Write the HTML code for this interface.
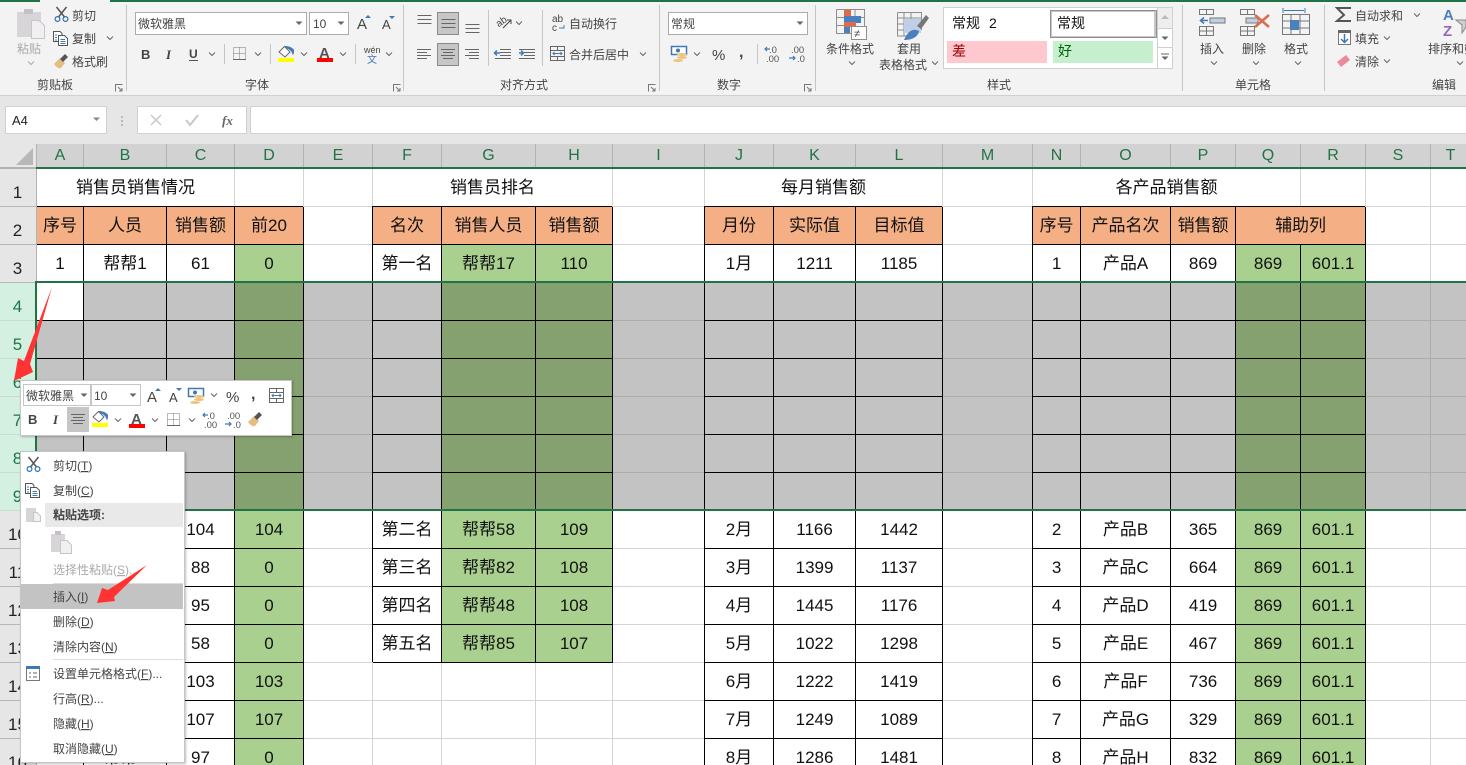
<!DOCTYPE html>
<html lang="zh">
<head>
<meta charset="utf-8">
<title>Excel</title>
<style>
html,body{margin:0;padding:0;width:1466px;height:765px;overflow:hidden;background:#fff}
body{position:relative;font-family:"Liberation Sans","Noto Sans CJK SC",sans-serif}
.abs{position:absolute}
svg text{font-family:"Liberation Sans","Noto Sans CJK SC",sans-serif;font-size:12px;fill:#444}
#sheet{position:absolute;left:37px;top:169px;border-collapse:separate;border-spacing:0;table-layout:fixed;width:1459px}
#sheet td{box-sizing:border-box;height:38px;padding:0;border-right:1px solid #d4d4d4;border-bottom:1px solid #d4d4d4;text-align:center;white-space:nowrap;overflow:hidden;font-size:17px;line-height:36px;color:#111}
#sheet tr.u td{line-height:34px}
#sheet td.b{border-color:#000;box-shadow:-1px -1px 0 #000}
#sheet td.o{background:#f4b084}
#sheet td.g{background:#a9d08e}
#sheet tr.s td{background:#c3c3c3;border-color:#acacac}
#sheet tr.s td.b{border-color:#000}
#sheet tr.s td.g{background:#84a16f}
#sheet tr.s td.w{background:#fff}
#colh{position:absolute;left:0;top:144px;width:1466px;height:24px;background:#d2d2d2;display:flex;overflow:hidden}
#colh div{box-sizing:border-box;flex:none;height:24px;border-right:1px solid #b2b2b2;text-align:center;font-size:16px;line-height:24px;color:#217346}
#rowh{position:absolute;left:0;top:169px;width:37px;height:596px;overflow:hidden}
#rowh div{box-sizing:border-box;height:38px;background:#e6e6e6;border-right:1px solid #b2b2b2;border-bottom:1px solid #b8b8b8;text-align:center;font-size:17px;line-height:47px;color:#222;padding-right:1px}
#rowh div.s{background:#d3f0e0;color:#217346;border-right-color:#217346;border-bottom-color:#c3e0d0}
</style>
</head>
<body>

<!-- SHEET -->
<table id="sheet">
<colgroup><col style="width:47px"><col style="width:83px"><col style="width:68px"><col style="width:69px"><col style="width:69px"><col style="width:69px"><col style="width:94px"><col style="width:77px"><col style="width:92px"><col style="width:69px"><col style="width:82px"><col style="width:87px"><col style="width:90px"><col style="width:48px"><col style="width:90px"><col style="width:65px"><col style="width:65px"><col style="width:65px"><col style="width:65px"><col style="width:65px"></colgroup>
<tr><td colspan="3">销售员销售情况</td><td></td><td></td><td colspan="3">销售员排名</td><td></td><td colspan="3">每月销售额</td><td></td><td colspan="4">各产品销售额</td><td></td><td></td><td></td></tr>
<tr><td class="b o">序号</td><td class="b o">人员</td><td class="b o">销售额</td><td class="b o">前20</td><td></td><td class="b o">名次</td><td class="b o">销售人员</td><td class="b o">销售额</td><td></td><td class="b o">月份</td><td class="b o">实际值</td><td class="b o">目标值</td><td></td><td class="b o">序号</td><td class="b o">产品名次</td><td class="b o">销售额</td><td class="b o" colspan="2">辅助列</td><td></td><td></td></tr>
<tr><td class="b">1</td><td class="b">帮帮1</td><td class="b">61</td><td class="b g">0</td><td></td><td class="b">第一名</td><td class="b g">帮帮17</td><td class="b g">110</td><td></td><td class="b">1月</td><td class="b">1211</td><td class="b">1185</td><td></td><td class="b">1</td><td class="b">产品A</td><td class="b">869</td><td class="b g">869</td><td class="b g">601.1</td><td></td><td></td></tr>
<tr class="s"><td class="b w"></td><td class="b"></td><td class="b"></td><td class="b g"></td><td></td><td class="b"></td><td class="b g"></td><td class="b g"></td><td></td><td class="b"></td><td class="b"></td><td class="b"></td><td></td><td class="b"></td><td class="b"></td><td class="b"></td><td class="b g"></td><td class="b g"></td><td></td><td></td></tr>
<tr class="s"><td class="b"></td><td class="b"></td><td class="b"></td><td class="b g"></td><td></td><td class="b"></td><td class="b g"></td><td class="b g"></td><td></td><td class="b"></td><td class="b"></td><td class="b"></td><td></td><td class="b"></td><td class="b"></td><td class="b"></td><td class="b g"></td><td class="b g"></td><td></td><td></td></tr>
<tr class="s"><td class="b"></td><td class="b"></td><td class="b"></td><td class="b g"></td><td></td><td class="b"></td><td class="b g"></td><td class="b g"></td><td></td><td class="b"></td><td class="b"></td><td class="b"></td><td></td><td class="b"></td><td class="b"></td><td class="b"></td><td class="b g"></td><td class="b g"></td><td></td><td></td></tr>
<tr class="s"><td class="b"></td><td class="b"></td><td class="b"></td><td class="b g"></td><td></td><td class="b"></td><td class="b g"></td><td class="b g"></td><td></td><td class="b"></td><td class="b"></td><td class="b"></td><td></td><td class="b"></td><td class="b"></td><td class="b"></td><td class="b g"></td><td class="b g"></td><td></td><td></td></tr>
<tr class="s"><td class="b"></td><td class="b"></td><td class="b"></td><td class="b g"></td><td></td><td class="b"></td><td class="b g"></td><td class="b g"></td><td></td><td class="b"></td><td class="b"></td><td class="b"></td><td></td><td class="b"></td><td class="b"></td><td class="b"></td><td class="b g"></td><td class="b g"></td><td></td><td></td></tr>
<tr class="s"><td class="b"></td><td class="b"></td><td class="b"></td><td class="b g"></td><td></td><td class="b"></td><td class="b g"></td><td class="b g"></td><td></td><td class="b"></td><td class="b"></td><td class="b"></td><td></td><td class="b"></td><td class="b"></td><td class="b"></td><td class="b g"></td><td class="b g"></td><td></td><td></td></tr>
<tr class="u"><td class="b">2</td><td class="b">帮帮2</td><td class="b">104</td><td class="b g">104</td><td></td><td class="b">第二名</td><td class="b g">帮帮58</td><td class="b g">109</td><td></td><td class="b">2月</td><td class="b">1166</td><td class="b">1442</td><td></td><td class="b">2</td><td class="b">产品B</td><td class="b">365</td><td class="b g">869</td><td class="b g">601.1</td><td></td><td></td></tr>
<tr class="u"><td class="b">3</td><td class="b">帮帮3</td><td class="b">88</td><td class="b g">0</td><td></td><td class="b">第三名</td><td class="b g">帮帮82</td><td class="b g">108</td><td></td><td class="b">3月</td><td class="b">1399</td><td class="b">1137</td><td></td><td class="b">3</td><td class="b">产品C</td><td class="b">664</td><td class="b g">869</td><td class="b g">601.1</td><td></td><td></td></tr>
<tr class="u"><td class="b">4</td><td class="b">帮帮4</td><td class="b">95</td><td class="b g">0</td><td></td><td class="b">第四名</td><td class="b g">帮帮48</td><td class="b g">108</td><td></td><td class="b">4月</td><td class="b">1445</td><td class="b">1176</td><td></td><td class="b">4</td><td class="b">产品D</td><td class="b">419</td><td class="b g">869</td><td class="b g">601.1</td><td></td><td></td></tr>
<tr class="u"><td class="b">5</td><td class="b">帮帮5</td><td class="b">58</td><td class="b g">0</td><td></td><td class="b">第五名</td><td class="b g">帮帮85</td><td class="b g">107</td><td></td><td class="b">5月</td><td class="b">1022</td><td class="b">1298</td><td></td><td class="b">5</td><td class="b">产品E</td><td class="b">467</td><td class="b g">869</td><td class="b g">601.1</td><td></td><td></td></tr>
<tr class="u"><td class="b">6</td><td class="b">帮帮6</td><td class="b">103</td><td class="b g">103</td><td></td><td></td><td></td><td></td><td></td><td class="b">6月</td><td class="b">1222</td><td class="b">1419</td><td></td><td class="b">6</td><td class="b">产品F</td><td class="b">736</td><td class="b g">869</td><td class="b g">601.1</td><td></td><td></td></tr>
<tr class="u"><td class="b">7</td><td class="b">帮帮7</td><td class="b">107</td><td class="b g">107</td><td></td><td></td><td></td><td></td><td></td><td class="b">7月</td><td class="b">1249</td><td class="b">1089</td><td></td><td class="b">7</td><td class="b">产品G</td><td class="b">329</td><td class="b g">869</td><td class="b g">601.1</td><td></td><td></td></tr>
<tr class="u"><td class="b">8</td><td class="b">帮帮8</td><td class="b">97</td><td class="b g">0</td><td></td><td></td><td></td><td></td><td></td><td class="b">8月</td><td class="b">1286</td><td class="b">1481</td><td></td><td class="b">8</td><td class="b">产品H</td><td class="b">832</td><td class="b g">869</td><td class="b g">601.1</td><td></td><td></td></tr>
</table>

<!-- Selection outline -->
<div class="abs" style="left:36px;top:281px;width:1430px;height:2px;background:#217346"></div>
<div class="abs" style="left:36px;top:509px;width:1430px;height:2px;background:#217346"></div>

<!-- Column headers -->
<div id="colh">
<div style="width:37px;background:#e6e6e6"></div><div style="width:47px">A</div><div style="width:83px">B</div><div style="width:68px">C</div><div style="width:69px">D</div><div style="width:69px">E</div><div style="width:69px">F</div><div style="width:94px">G</div><div style="width:77px">H</div><div style="width:92px">I</div><div style="width:69px">J</div><div style="width:82px">K</div><div style="width:87px">L</div><div style="width:90px">M</div><div style="width:48px">N</div><div style="width:90px">O</div><div style="width:65px">P</div><div style="width:65px">Q</div><div style="width:65px">R</div><div style="width:65px">S</div><div style="width:65px;border-right:0;padding-right:26px">T</div>
</div>
<div class="abs" style="left:0;top:167px;width:36px;height:2px;background:#b2b2b2"></div>
<div class="abs" style="left:36px;top:167px;width:1430px;height:2px;background:#217346"></div>
<svg class="abs" style="left:0;top:144px" width="36" height="24"><path d="M33 4V21H16Z" fill="#b8b8b8"/></svg>

<!-- Row headers -->
<div id="rowh">
<div>1</div><div>2</div><div>3</div><div class="s">4</div><div class="s">5</div><div class="s">6</div><div class="s">7</div><div class="s">8</div><div class="s">9</div><div>10</div><div>11</div><div>12</div><div>13</div><div>14</div><div>15</div><div>16</div>
</div>
<div class="abs" style="left:35px;top:281px;width:2px;height:230px;background:#217346"></div>

<!-- RIBBON + FORMULA BAR -->
<div class="abs" style="left:0;top:0;width:1466px;height:96px;background:#f3f3f3;border-bottom:1px solid #d0d0d0;box-sizing:border-box"></div>
<div class="abs" style="left:0;top:96px;width:1466px;height:48px;background:#e6e6e6"></div>
<div class="abs" style="left:0;top:0;width:40px;height:2px;background:#217346"></div>
<div class="abs" style="left:110px;top:0;width:1356px;height:2px;background:#217346"></div>

<svg class="abs" style="left:0;top:0" width="1466" height="144" viewBox="0 0 1466 144">
<defs>
<path id="c" d="M-3 -1.5L0 1.5L3 -1.5" fill="none" stroke="#666"/>
<path id="t" d="M-3.5 -1.5H3.5L0 2Z" fill="#666"/>
<g id="l" fill="none" stroke="#777"><path d="M7.5 .5H.5V7.5"/><path d="M3 3L7 7M7 4V7H4"/></g>
<g id="sc" fill="none"><path d="M2.5 0L10.5 10M12.5 0L4.5 10" stroke="#555" stroke-width="1.5"/><circle cx="3.5" cy="12" r="2.4" stroke="#2f6fb0" stroke-width="1.2"/><circle cx="11.5" cy="12" r="2.4" stroke="#2f6fb0" stroke-width="1.2"/></g>
<g id="cp" fill="#fff" stroke="#555"><path d="M.5 .5H7L9 2.5V10.5H.5Z"/><path d="M5.500 4.500H11.500L14.500 7.500V14.500H5.500Z"/><path d="M2 4H4M2 6.500H4M2 9H4M7.500 8.500H12M7.500 10.500H12.500M7.500 12.500H12.500" stroke="#3f78b5" fill="none"/></g>
<g id="br"><path d="M0 10L6 4L11 9L7 14C5 15 2 13 0 10Z" fill="#e6bd85"/><path d="M6 5L11 0L14 3L9 8Z" fill="#555"/></g>
<g id="fb"><path d="M1 7L6.500 1.500L12 7L7 12Z" fill="#fff" stroke="#666"/><path d="M7 1C10 1 14 2 16 5C16 7 16 9 15 10C14 9 14 7 13 6C11 4 9 3 7 3Z" fill="#3f78b5"/><rect x="0" y="13" width="16" height="4" fill="#ff0"/></g>
<g id="fc"><text x="2" y="13" style="font-size:15px;font-weight:700;fill:#555">A</text><rect x="0" y="13" width="16" height="4" fill="#f00"/></g>
<g id="bd"><path d="M.5 .5H12.500V12.500H.5ZM6.500 .5V12.500M.5 6.500H12.500" fill="none" stroke="#777" stroke-dasharray="1 1"/><path d="M0 12.500H13" stroke="#666"/></g>
<g id="ac"><rect x=".5" y=".5" width="15" height="8" fill="#fff" stroke="#3f78b5" stroke-width="1.500"/><circle cx="7" cy="4.500" r="2" fill="#3f78b5"/><ellipse cx="11" cy="8.500" rx="5" ry="1.500" fill="#eec27f"/><ellipse cx="11" cy="11.500" rx="5" ry="1.500" fill="#eec27f"/><ellipse cx="7" cy="14.500" rx="5" ry="1.500" fill="#eec27f"/></g>
<g id="dl"><text x="4" y="7" style="font-size:9.500px;fill:#555">.0</text><text x="1" y="16" style="font-size:9.500px;fill:#555">.00</text><path d="M0 3H5M2 1L0 3L2 5" stroke="#3f78b5" fill="none" stroke-width="1.200"/></g>
<g id="dr"><text x="2" y="7" style="font-size:9.500px;fill:#555">.00</text><text x="8" y="16" style="font-size:9.500px;fill:#555">.0</text><path d="M0 12H6M4 10L6 12L4 14" stroke="#3f78b5" fill="none" stroke-width="1.200"/></g>
<g id="mg" fill="none" stroke="#666"><path d="M.5 .5H14.500V14.500H.5ZM.5 4.500H14.500M.5 10.500H14.500M7.500 .5V4.500M7.500 10.500V14.500"/><path d="M3 7.500H12M4.500 6L3 7.500L4.500 9M10.500 6L12 7.500L10.500 9" stroke="#3f78b5"/></g>
<g id="al" stroke="#666"><path d="M.5 .5H14.500M.5 4.500H14.500M.5 8.500H14.500" fill="none"/></g>
</defs>

<!-- Clipboard -->
<rect x="17" y="12" width="24" height="25" rx="1" fill="#d8d5d8"/><rect x="24" y="9" width="9" height="5" fill="#c4c0c4"/>
<path d="M31.500 20.500H39L44.500 25.500V38.500H31.500Z" fill="#f1eff2" stroke="#c8c5c8"/>
<text x="17" y="53" style="fill:#a8a8a8">粘贴</text>
<use href="#c" x="31" y="63" opacity=".5"/>
<use href="#sc" x="54" y="7"/><text x="72" y="20">剪切</text>
<use href="#cp" x="53" y="31"/><text x="72" y="43">复制</text><use href="#c" x="110" y="38"/>
<use href="#br" x="54" y="54"/><text x="72" y="66">格式刷</text>
<text x="37" y="89">剪贴板</text><use href="#l" x="115" y="84"/>
<path d="M126.500 5V91M403.500 5V91M659.500 5V91M815.500 5V91M1182.500 5V91M1324.500 5V91" stroke="#c6c6c6"/>

<!-- Font -->
<rect x="135.500" y="12.500" width="171" height="22" fill="#fff" stroke="#ababab"/><text x="138" y="28">微软雅黑</text><use href="#t" x="299" y="23"/>
<rect x="309.500" y="12.500" width="39" height="22" fill="#fff" stroke="#ababab"/><text x="313" y="28">10</text><use href="#t" x="341" y="23"/>
<text x="357" y="29" style="font-size:15px">A</text><path d="M365 18h6l-3-3z" fill="#3f78b5"/>
<text x="382" y="29" style="font-size:13px">A</text><path d="M389 16h6l-3 3z" fill="#3f78b5"/>
<text x="141" y="59" style="font-weight:700;font-size:13px">B</text><text x="166" y="59" style="font-style:italic;font-family:'Liberation Serif',serif;font-weight:700;font-size:13px">I</text>
<text x="189" y="58" style="font-weight:700">U</text><path d="M189 60.500h9" stroke="#555"/><use href="#c" x="212" y="54"/>
<path d="M224.500 44V64M270.500 44V64M355.500 44V64M488.500 10V66M542.500 10V66M757.500 44V64" stroke="#c6c6c6"/>
<use href="#bd" x="233" y="47"/><use href="#c" x="258" y="54"/>
<use href="#fb" x="278" y="45"/><use href="#c" x="304" y="54"/>
<use href="#fc" x="317" y="45"/><use href="#c" x="343" y="54"/>
<text x="364" y="53" style="font-size:9px">wén</text><text x="367" y="63" style="font-size:10px;fill:#3f78b5">文</text><use href="#c" x="389" y="54"/>
<text x="245" y="89">字体</text><use href="#l" x="393" y="84"/>

<!-- Alignment -->
<use href="#al" x="417" y="15"/>
<rect x="437.500" y="12.500" width="21" height="22" fill="#c6c6c6" stroke="#8a8a8a"/><use href="#al" x="441" y="19"/>
<use href="#al" x="465" y="24"/>
<g stroke="#666"><path d="M417 49.500H431M417 52.500H427M417 55.500H431M417 58.500H427"/><path d="M465 49.500H479M469 52.500H479M465 55.500H479M469 58.500H479"/></g>
<rect x="437.500" y="43.500" width="21" height="22" fill="#c6c6c6" stroke="#8a8a8a"/><path d="M441 49.500H455M443 52.500H453M441 55.500H455M443 58.500H453" stroke="#666"/>
<text x="496" y="25" style="font-size:10px" transform="rotate(-35 501 22)">ab</text><path d="M503 28L511 20M507 20H511V24" stroke="#444" fill="none"/><use href="#c" x="519" y="23"/>
<path d="M500 49.500H511M500 52.500H511M500 55.500H511M495 58.500H511M519 49.500H535M524 52.500H535M524 55.500H535M519 58.500H535" stroke="#666"/>
<path d="M500 53H495M497 50.500L494.500 53L497 55.500" stroke="#3f78b5" fill="none" stroke-width="1.500"/><path d="M519 53H523M521 50.500L523.500 53L521 55.500" stroke="#3f78b5" fill="none" stroke-width="1.500"/>
<text x="552" y="22" style="font-size:10px">ab</text><text x="552" y="31" style="font-size:10px">c</text><path d="M564 25V28H559" stroke="#3f78b5" fill="none"/>
<text x="569" y="28">自动换行</text>
<use href="#mg" x="550" y="46"/><text x="569" y="59">合并后居中</text><use href="#c" x="643" y="54"/>
<text x="500" y="89">对齐方式</text><use href="#l" x="648" y="84"/>

<!-- Number -->
<rect x="668.500" y="12.500" width="139" height="22" fill="#fff" stroke="#ababab"/><text x="671" y="28">常规</text><use href="#t" x="800" y="23"/>
<use href="#ac" x="671" y="46"/><use href="#c" x="697" y="54"/>
<text x="712" y="60" style="font-size:15px">%</text><text x="739" y="57" style="font-size:16px;font-weight:700">,</text>
<use href="#dl" x="765" y="46"/><use href="#dr" x="789" y="46"/>
<text x="717" y="89">数字</text><use href="#l" x="804" y="84"/>

<!-- Cond format -->
<g fill="none" stroke="#8e8e8e"><path d="M836.500 9.500H864.500V33M836.500 9.500V33.500H856M836.500 17.500H864.500M836.500 25.500H856M846 9.500V33.500M855 9.500V25"/></g>
<rect x="844" y="10" width="7" height="7" fill="#dd6b4d"/><rect x="844" y="16" width="17" height="7" fill="#4a80bd"/><rect x="844" y="22" width="12" height="5" fill="#dd6b4d"/><rect x="844" y="27" width="6" height="6" fill="#4a80bd"/>
<rect x="851.500" y="26.500" width="15" height="13" fill="#fff" stroke="#8e8e8e"/><text x="854" y="37" style="font-size:11px">≠</text>
<text x="826" y="53">条件格式</text><use href="#c" x="852" y="63"/>
<g fill="none" stroke="#8e8e8e"><path d="M897.500 12.500H921.500V30M897.500 12.500V36H908M897.500 18H921.500M897.500 24H912M897.500 30H908M904 12.500V36M911 12.500V30"/></g>
<rect x="904" y="19" width="17" height="14" fill="#bfd0e6"/>
<path d="M917 26L926 15L929 18L921 29Z" fill="#777"/><path d="M904 40C908 30 914 28 919 31C918 37 912 40 904 40Z" fill="#4a80bd"/>
<text x="897" y="53">套用</text><text x="879" y="69">表格格式</text><use href="#c" x="935" y="63"/>

<!-- Styles -->
<rect x="943.500" y="7.500" width="229" height="61" fill="#fff" stroke="#d0d0d0"/>
<text x="952" y="28" style="font-size:14px;fill:#111">常规</text><text x="989" y="28" style="font-size:14px;fill:#111">2</text>
<rect x="1051" y="11" width="104" height="26" fill="#fff" stroke="#c6c6c6" stroke-width="2"/><rect x="1050.500" y="10.500" width="106" height="27" fill="none" stroke="#8f8f8f"/>
<text x="1057" y="28" style="font-size:14px;fill:#111">常规</text>
<rect x="947" y="41" width="100" height="22" fill="#ffc7ce"/><text x="952" y="56" style="font-size:14px;fill:#9c0006">差</text>
<rect x="1053" y="41" width="100" height="22" fill="#c6efce"/><text x="1058" y="56" style="font-size:14px;fill:#006100">好</text>
<path d="M1157.500 7.500V68.500M1157.500 28.500H1172M1157.500 47.500H1172" stroke="#d0d0d0"/>
<rect x="1158" y="8" width="14" height="20" fill="#eee"/>
<path d="M1165 15l4 4h-8z" fill="#bbb"/><use href="#t" x="1165" y="38"/><path d="M1161 54h8" stroke="#666"/><use href="#t" x="1165" y="58"/>
<text x="987" y="89">样式</text>

<!-- Cells -->
<g fill="none" stroke="#777"><path d="M1199.500 9.500H1213.500V14.500H1199.500ZM1206.500 9.500V14.500"/><path d="M1199.500 26.500H1213.500V35.500H1199.500ZM1199.500 31H1213.500M1206.500 26.500V35.500"/></g>
<rect x="1210" y="18" width="15" height="5" fill="#bfd0e6" stroke="#777"/>
<path d="M1208 20.500H1201M1204 17.500L1200.500 20.500L1204 23.500" stroke="#3f78b5" fill="none" stroke-width="1.500"/>
<text x="1200" y="53">插入</text><use href="#c" x="1214" y="63"/>
<g fill="none" stroke="#777"><path d="M1240.500 9.500H1254.500V14.500H1240.500ZM1247.500 9.500V14.500"/><path d="M1240.500 26.500H1254.500V35.500H1240.500ZM1240.500 31H1254.500M1247.500 26.500V35.500"/></g>
<rect x="1246" y="18" width="12" height="5" fill="#bfd0e6" stroke="#777"/>
<path d="M1255 15L1269 27M1269 15L1255 27" stroke="#dd6b4d" stroke-width="2.500"/>
<text x="1242" y="53">删除</text><use href="#c" x="1256" y="63"/>
<path d="M1283 8V13M1305 8V13M1284 10.500H1304" stroke="#3f78b5" fill="none"/>
<g fill="none" stroke="#777"><path d="M1282.500 14.500H1309.500V34.500H1282.500ZM1282.500 21H1309.500M1282.500 28H1309.500M1291 14.500V34.500M1300 14.500V34.500"/></g>
<rect x="1290" y="20" width="9" height="10" fill="#4a80bd"/>
<text x="1284" y="53">格式</text><use href="#c" x="1298" y="63"/>
<text x="1235" y="89">单元格</text>

<!-- Edit -->
<path d="M1351 8H1337L1344 15L1337 21H1351" fill="none" stroke="#555" stroke-width="2"/><text x="1355" y="20">自动求和</text><use href="#c" x="1417" y="15"/>
<rect x="1338.500" y="30.500" width="12" height="14" fill="#fff" stroke="#777"/><rect x="1338" y="30" width="13" height="3" fill="#666"/><path d="M1344.500 34V42M1341 39L1344.500 42.500L1348 39" stroke="#3f78b5" fill="none" stroke-width="1.500"/>
<text x="1355" y="43">填充</text><use href="#c" x="1387" y="38"/>
<path d="M1337 62L1346 55L1350 60L1341 67Z" fill="#ea8b9b"/><text x="1355" y="66">清除</text><use href="#c" x="1387" y="61"/>
<text x="1443" y="20" style="font-size:15px;font-weight:700;fill:#4a80bd">A</text><text x="1443" y="36" style="font-size:15px;font-weight:700;fill:#9468bd">Z</text>
<path d="M1456 20H1466V27L1462 33V25Z" fill="#d0d0d0" stroke="#888"/>
<text x="1428" y="53">排序和筛选</text><use href="#c" x="1460" y="63"/>
<text x="1432" y="89">编辑</text>

<!-- Formula bar -->
<rect x="5.500" y="106.500" width="101" height="27" fill="#fff" stroke="#d0d0d0"/><text x="12" y="125" style="font-size:13px;fill:#222">A4</text><path d="M93 117.500h7l-3.500 3.500z" fill="#888"/>
<path d="M122 116v2M122 120v2M122 124v2" stroke="#aaa" stroke-width="1.500"/>
<rect x="137.500" y="106.500" width="109" height="27" fill="#fff" stroke="#d0d0d0"/>
<path d="M151 115L161 125M161 115L151 125" stroke="#c8c8c8" stroke-width="1.500"/>
<path d="M186 120L190 125L198 115" stroke="#c8c8c8" stroke-width="2" fill="none"/>
<text x="222" y="125" style="font-family:'Liberation Serif',serif;font-style:italic;font-weight:700;font-size:13px;fill:#666">fx</text>
<rect x="250.500" y="106.500" width="1216" height="27" fill="#fff" stroke="#d0d0d0"/>
</svg>

<!-- Red arrow 1 -->
<svg class="abs" style="left:0;top:0" width="200" height="765"><path d="M52 287L30 364L33 372L14 381L18 358L24 361Z" fill="#f33"/></svg>

<!-- Mini toolbar -->
<div class="abs" style="left:20px;top:380px;width:272px;height:56px;background:#fff;border:1px solid #c6c6c6;box-sizing:border-box;box-shadow:1px 1px 2px rgba(0,0,0,.25)"></div>
<svg class="abs" style="left:0;top:375px" width="300" height="65" viewBox="0 375 300 65">
<rect x="23.500" y="384.500" width="67" height="21" fill="#fff" stroke="#c6c6c6"/><text x="26" y="400">微软雅黑</text><use href="#t" x="84" y="395"/>
<rect x="91.500" y="384.500" width="49" height="21" fill="#fff" stroke="#c6c6c6"/><text x="94" y="400">10</text><use href="#t" x="133" y="395"/>
<text x="147" y="402" style="font-size:15px">A</text><path d="M155 391h6l-3-3z" fill="#3f78b5"/>
<text x="169" y="402" style="font-size:13px">A</text><path d="M176 388h6l-3 3z" fill="#3f78b5"/>
<use href="#ac" x="188" y="388"/><use href="#c" x="214" y="395"/>
<text x="226" y="402" style="font-size:15px">%</text><text x="251" y="399" style="font-size:16px;font-weight:700">,</text>
<use href="#mg" x="269" y="388"/>
<text x="28" y="424" style="font-weight:700;font-size:13px">B</text><text x="53" y="424" style="font-style:italic;font-family:'Liberation Serif',serif;font-weight:700;font-size:13px">I</text>
<rect x="67" y="407" width="22" height="25" fill="#c6c6c6"/><path d="M71 414.500H85M73 417.500H83M71 420.500H85M73 423.500H83" stroke="#666"/>
<use href="#fb" x="92" y="410"/><use href="#c" x="118" y="420"/>
<use href="#fc" x="129" y="411"/><use href="#c" x="155" y="420"/>
<use href="#bd" x="167" y="413"/><use href="#c" x="192" y="420"/>
<use href="#dl" x="203" y="412"/><use href="#dr" x="225" y="412"/>
<use href="#br" x="248" y="412"/>
</svg>

<!-- Context menu -->
<div class="abs" style="left:20px;top:451px;width:165px;height:312px;background:#fff;border:1px solid #c6c6c6;box-sizing:border-box;box-shadow:1px 1px 2px rgba(0,0,0,.25)"></div>
<svg class="abs" style="left:0;top:445px" width="200" height="320" viewBox="0 445 200 320">
<rect x="45" y="503" width="138" height="24" fill="#e9e9e9"/>
<rect x="21" y="584" width="162" height="25" fill="#c3c3c3"/>
<path d="M53 583.500H183M53 659.500H183" stroke="#ddd"/>
<use href="#sc" x="26" y="457"/>
<use href="#cp" x="25" y="483"/>
<rect x="26" y="508" width="10" height="14" fill="#d8d5d8"/><path d="M33.500 512.500H37L40.500 516V521.500H33.500Z" fill="#f1eff2" stroke="#c8c5c8"/>
<rect x="51" y="534" width="14" height="18" fill="#d8d5d8"/><rect x="55" y="531" width="6" height="4" fill="#c4c0c4"/><path d="M60.500 540.500H67L71.500 545V553.500H60.500Z" fill="#f1eff2" stroke="#c8c5c8"/>
<rect x="26.500" y="666.500" width="13" height="14" fill="#fff" stroke="#777"/><rect x="26" y="666" width="14" height="3" fill="#3f78b5"/><path d="M29 673h2M29 677h2M33 673h4M33 677h4" stroke="#666"/>
<text x="53" y="470">剪切(<tspan text-decoration="underline">T</tspan>)</text>
<text x="53" y="495">复制(<tspan text-decoration="underline">C</tspan>)</text>
<text x="53" y="519" style="font-weight:700">粘贴选项:</text>
<text x="53" y="574" style="fill:#aaa">选择性粘贴(<tspan text-decoration="underline">S</tspan>)...</text>
<text x="53" y="601">插入(<tspan text-decoration="underline">I</tspan>)</text>
<text x="53" y="626">删除(<tspan text-decoration="underline">D</tspan>)</text>
<text x="53" y="651">清除内容(<tspan text-decoration="underline">N</tspan>)</text>
<text x="53" y="678">设置单元格格式(<tspan text-decoration="underline">F</tspan>)...</text>
<text x="53" y="703">行高(<tspan text-decoration="underline">R</tspan>)...</text>
<text x="53" y="728">隐藏(<tspan text-decoration="underline">H</tspan>)</text>
<text x="53" y="753">取消隐藏(<tspan text-decoration="underline">U</tspan>)</text>
<path d="M147 565L114 597L115 601L97 603L102 588L108 590Z" fill="#f33"/>
</svg>

</body>
</html>
